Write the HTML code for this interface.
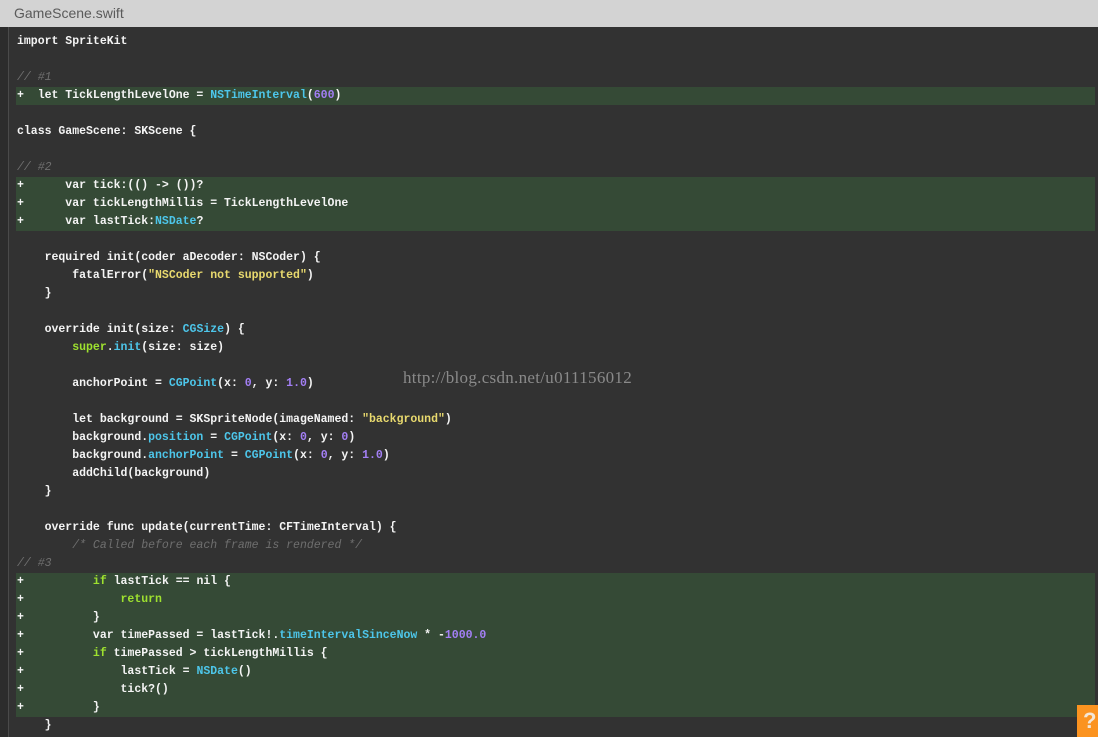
<!DOCTYPE html>
<html><head><meta charset="utf-8"><style>
*{margin:0;padding:0;box-sizing:border-box}
body{width:1098px;height:737px;overflow:hidden;background:#323232;position:relative;font-family:"Liberation Mono",monospace}
#hd{position:absolute;left:0;top:0;width:1098px;height:27px;background:#d3d3d3;color:#5a5a5a;font:14px "Liberation Sans",sans-serif;padding:5px 0 0 14px}
#gut{position:absolute;left:0;top:27px;width:9px;height:710px;background:#2c2c2c;border-right:1px solid #4a4a4a}
#code{position:absolute;left:16px;top:33px;width:1079px}
.l{height:18px;line-height:18px;font-size:11.5px;font-weight:bold;color:#f4f4f4;white-space:pre;padding-left:1px}
.a{background:#354a36}
.t{color:#4dc6ea}.n{color:#a37ff5}.s{color:#e8d96e}.k{color:#9ee12f}.c{color:#6f6f6f;font-style:italic;font-weight:normal}
#wm{position:absolute;left:403px;top:368px;font:17px "Liberation Serif",serif;color:#8a8a8a;letter-spacing:0.3px}
#q{position:absolute;left:1077px;top:705px;width:21px;height:32px;background:#fb9320;color:#f3e6d6;font:bold 22px "Liberation Sans",sans-serif;padding:3px 0 0 6px;overflow:hidden}
</style></head><body>
<div id="hd">GameScene.swift</div>
<div id="gut"></div>
<div id="code">
<div class="l">import SpriteKit</div>
<div class="l"> </div>
<div class="l c">// #1</div>
<div class="l a">+  let TickLengthLevelOne = <span class="t">NSTimeInterval</span>(<span class="n">600</span>)</div>
<div class="l"> </div>
<div class="l">class GameScene: SKScene {</div>
<div class="l"> </div>
<div class="l c">// #2</div>
<div class="l a">+      var tick:(() -&gt; ())?</div>
<div class="l a">+      var tickLengthMillis = TickLengthLevelOne</div>
<div class="l a">+      var lastTick:<span class="t">NSDate</span>?</div>
<div class="l"> </div>
<div class="l">    required init(coder aDecoder: NSCoder) {</div>
<div class="l">        fatalError(<span class="s">"NSCoder not supported"</span>)</div>
<div class="l">    }</div>
<div class="l"> </div>
<div class="l">    override init(size: <span class="t">CGSize</span>) {</div>
<div class="l">        <span class="k">super</span>.<span class="t">init</span>(size: size)</div>
<div class="l"> </div>
<div class="l">        anchorPoint = <span class="t">CGPoint</span>(x: <span class="n">0</span>, y: <span class="n">1.0</span>)</div>
<div class="l"> </div>
<div class="l">        let background = SKSpriteNode(imageNamed: <span class="s">"background"</span>)</div>
<div class="l">        background.<span class="t">position</span> = <span class="t">CGPoint</span>(x: <span class="n">0</span>, y: <span class="n">0</span>)</div>
<div class="l">        background.<span class="t">anchorPoint</span> = <span class="t">CGPoint</span>(x: <span class="n">0</span>, y: <span class="n">1.0</span>)</div>
<div class="l">        addChild(background)</div>
<div class="l">    }</div>
<div class="l"> </div>
<div class="l">    override func update(currentTime: CFTimeInterval) {</div>
<div class="l">        <span class="c">/* Called before each frame is rendered */</span></div>
<div class="l c">// #3</div>
<div class="l a">+          <span class="k">if</span> lastTick == nil {</div>
<div class="l a">+              <span class="k">return</span></div>
<div class="l a">+          }</div>
<div class="l a">+          var timePassed = lastTick!.<span class="t">timeIntervalSinceNow</span> * -<span class="n">1000.0</span></div>
<div class="l a">+          <span class="k">if</span> timePassed &gt; tickLengthMillis {</div>
<div class="l a">+              lastTick = <span class="t">NSDate</span>()</div>
<div class="l a">+              tick?()</div>
<div class="l a">+          }</div>
<div class="l">    }</div>
</div>
<div id="wm">http://blog.csdn.net/u011156012</div>
<div id="q">?</div>
</body></html>
